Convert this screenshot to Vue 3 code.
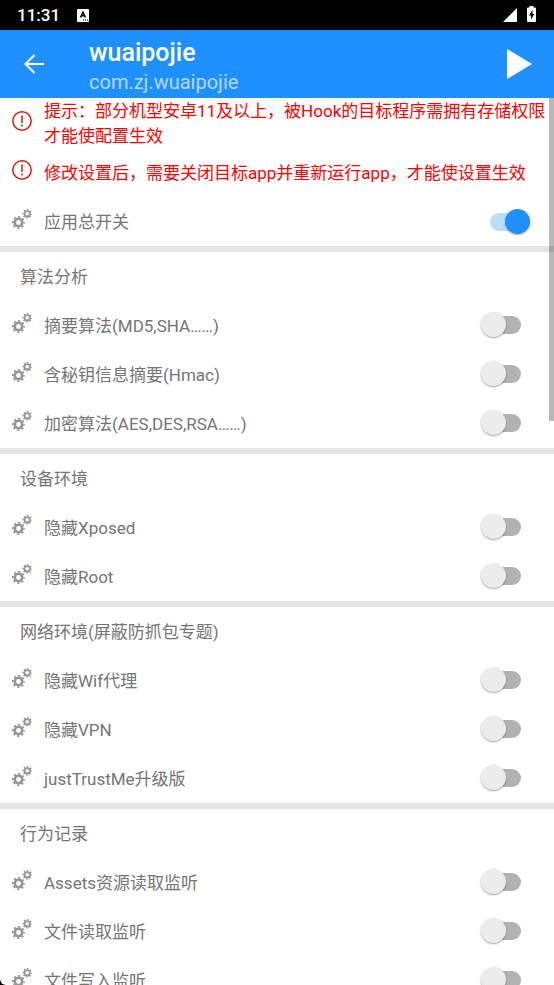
<script setup>
import { reactive, ref } from 'vue'

const enabled = ref(true)
const notices = [
  '提示：部分机型安卓11及以上，被Hook的目标程序需拥有存储权限才能使配置生效',
  '修改设置后，需要关闭目标app并重新运行app，才能使设置生效',
]
const groups = reactive([
  {
    title: '算法分析',
    items: [
      { label: '摘要算法(MD5,SHA……)', on: false },
      { label: '含秘钥信息摘要(Hmac)', on: false },
      { label: '加密算法(AES,DES,RSA……)', on: false },
    ],
  },
  {
    title: '设备环境',
    items: [
      { label: '隐藏Xposed', on: false },
      { label: '隐藏Root', on: false },
    ],
  },
  {
    title: '网络环境(屏蔽防抓包专题)',
    items: [
      { label: '隐藏Wif代理', on: false },
      { label: '隐藏VPN', on: false },
      { label: 'justTrustMe升级版', on: false },
    ],
  },
  {
    title: '行为记录',
    items: [
      { label: 'Assets资源读取监听', on: false },
      { label: '文件读取监听', on: false },
      { label: '文件写入监听', on: false },
    ],
  },
])
</script>

<template>
  <div class="screen">
    <svg class="defs" width="0" height="0" aria-hidden="true">
      <symbol id="gears" viewBox="0 0 20 20">
        <g fill="none" stroke="currentColor">
          <circle cx="6.5" cy="13.5" r="3.7" stroke-width="2.6" />
          <circle cx="6.5" cy="13.5" r="5.6" stroke-width="1.8" stroke-dasharray="2.2 2.198" stroke-dashoffset="1.1" />
          <circle cx="15.2" cy="4.8" r="2.7" stroke-width="1.8" />
          <circle cx="15.2" cy="4.8" r="4.1" stroke-width="1.400" stroke-dasharray="1.61 1.61" stroke-dashoffset="0.8" />
        </g>
      </symbol>
    </svg>

    <div class="status">
      <span class="clock">11:31</span>
      <svg class="ime" width="12" height="13" viewBox="0 0 12 13" aria-hidden="true">
        <rect width="12" height="13" rx="1" fill="#fff" />
        <path d="M3.500 8.500 6 3.200l2.500 5.300M4.300 6.800h3.400" fill="none" stroke="#000" stroke-width="1.500" />
        <path d="M6 11h1M8 11h1M10 11h1" stroke="#000" stroke-width="1" />
      </svg>
      <svg class="signal" width="14" height="14" viewBox="0 0 14 14" aria-hidden="true">
        <path d="M14 0v14H0z" fill="#fff" />
      </svg>
      <svg class="battery" width="9" height="16" viewBox="0 0 9 16" aria-hidden="true">
        <path d="M2.500 0h4v1.500H8a1 1 0 0 1 1 1V15a1 1 0 0 1-1 1H1a1 1 0 0 1-1-1V2.500a1 1 0 0 1 1-1h1.500z" fill="#fff" />
        <path d="M5.500 4 2 9.500h2v4L7.300 8H5.500z" fill="#000" />
      </svg>
    </div>

    <header class="bar">
      <button class="icon-button" type="button" aria-label="返回">
        <svg width="20" height="20" viewBox="0 0 20 20">
          <path d="M20 10H1.500M10.500 1 1.500 10l9 9" fill="none" stroke="#fff" stroke-width="2" />
        </svg>
      </button>
      <div class="titles">
        <h1>wuaipojie</h1>
        <p>com.zj.wuaipojie</p>
      </div>
      <button class="icon-button" type="button" aria-label="运行">
        <svg width="25" height="30" viewBox="0 0 25 30">
          <path d="M0 0v30l25-15z" fill="#fff" />
        </svg>
      </button>
    </header>

    <div class="body">
      <main class="list">
        <section class="group">
          <div v-for="text in notices" :key="text" class="notice">
            <svg width="20" height="20" viewBox="0 0 20 20" aria-hidden="true">
              <circle cx="10" cy="10" r="9.200" fill="none" stroke="#d81e06" stroke-width="1.500" />
              <path d="M10 4.500v7.500M10 13.500v2" stroke="#d81e06" stroke-width="1.500" />
            </svg>
            <p>{{ text }}</p>
          </div>
          <label class="row master">
            <svg class="gears" width="20" height="20"><use href="#gears" /></svg>
            <span>应用总开关</span>
            <input v-model="enabled" class="switch" type="checkbox" role="switch" />
          </label>
        </section>

        <section v-for="group in groups" :key="group.title" class="group">
          <h2>{{ group.title }}</h2>
          <label v-for="item in group.items" :key="item.label" class="row">
            <svg class="gears" width="20" height="20"><use href="#gears" /></svg>
            <span>{{ item.label }}</span>
            <input v-model="item.on" class="switch" type="checkbox" role="switch" />
          </label>
        </section>
      </main>
      <div class="thumb" aria-hidden="true"></div>
    </div>
  </div>
</template>

<style>
body {
  background: #000;
}
</style>

<style scoped>
.screen {
  display: flex;
  flex-direction: column;
  height: 100vh;
  overflow: hidden;
  border-bottom-left-radius: 6px;
  background: #fff;
  color: #757575;
  font-family: Roboto, "Noto Sans CJK SC", sans-serif;
  font-size: 17px;
  line-height: 25px;
}

.defs {
  position: absolute;
}

h1,
h2,
p {
  margin: 0;
}

.status {
  display: flex;
  flex: none;
  align-items: center;
  height: 30px;
  padding: 0 18px 0 17px;
  background: #000;
  color: #fff;
}

.clock {
  font-weight: 500;
}

.ime {
  margin-left: 17px;
}

.signal {
  margin-right: 10px;
  margin-left: auto;
}

.battery {
  margin-bottom: 2px;
}

.bar {
  display: flex;
  flex: none;
  align-items: center;
  height: 68px;
  padding: 0 22px 0 24px;
  background: #1e90ff;
  color: #fff;
}

.icon-button {
  display: flex;
  padding: 0;
  border: 0;
  background: none;
}

.titles {
  flex: 1;
  padding: 4px 0 0 45px;
}

.titles h1 {
  font-size: 25px;
  font-weight: 500;
  line-height: 32px;
}

.titles p {
  color: #b4daff;
  font-size: 20px;
  line-height: 26px;
}

.body {
  position: relative;
  flex: 1;
  min-height: 0;
}

.list {
  height: 100%;
  overflow-y: auto;
  scrollbar-width: none;
}

.thumb {
  position: absolute;
  top: 0;
  right: 0;
  width: 5px;
  height: 36.4%;
  background: rgba(0, 0, 0, 0.28);
}

.group + .group {
  border-top: 6px solid #e5e5e5;
}

.notice {
  display: flex;
  align-items: center;
  gap: 12px;
  min-height: 47px;
  padding: 1px 0 0 12px;
  color: #f00;
}

.notice svg {
  flex: none;
  margin-bottom: 7px;
}

.notice p {
  flex: 1;
}

h2 {
  padding: 13px 20px 11px;
  font-size: 17px;
  font-weight: 400;
}

.row {
  display: flex;
  align-items: center;
  gap: 12px;
  height: 49px;
  padding: 0 33px 0 12px;
}

.row span {
  flex: 1;
  padding-top: 2px;
}

.gears {
  flex: none;
  margin-bottom: 6px;
  color: #969696;
}

.switch {
  display: grid;
  flex: none;
  align-items: center;
  width: 40px;
  height: 25px;
  margin: 0 0 2px;
  appearance: none;
}

.master {
  padding-right: 24px;
}

.master .switch {
  margin-bottom: 0;
}

.switch::before,
.switch::after {
  grid-area: 1 / 1;
  content: "";
}

.switch::before {
  justify-self: end;
  width: 34px;
  height: 18px;
  border-radius: 9px;
  background: #b2b2b2;
}

.switch::after {
  justify-self: start;
  width: 25px;
  height: 25px;
  border-radius: 50%;
  background: #ececec;
  box-shadow: 0 1px 2px rgba(0, 0, 0, 0.35);
}

.switch:checked::before {
  justify-self: start;
  background: #bbdeff;
}

.switch:checked::after {
  justify-self: end;
  background: #1e90ff;
}
</style>
